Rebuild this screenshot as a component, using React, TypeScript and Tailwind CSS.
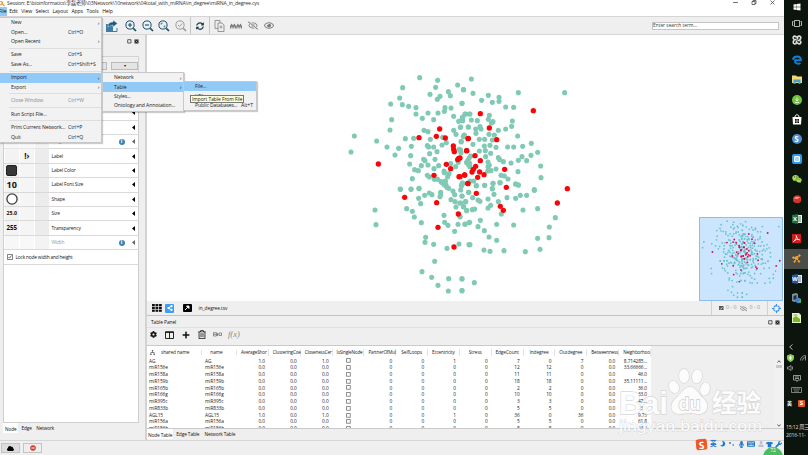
import type { ReactNode } from "react";
import {
  FaCloud,
  FaCog,
  FaEdge,
  FaKeyboard,
  FaMicrophone,
  FaMoon,
  FaPlus,
  FaRegEye,
  FaRegEyeSlash,
  FaRegTrashAlt,
  FaShareAlt,
  FaSyncAlt,
  FaTshirt,
  FaUser,
  FaWeixin,
  FaWindows,
  FaWrench,
} from "react-icons/fa";

type Cluster = { x: number; y: number; teal: string; red: string };

// node positions per cluster, stored in thirds of a pixel from the cluster origin
const clusters: Cluster[] = [
  {
    x: 340,
    y: 70,
    teal: "239,23 293,31 188,53 287,52 353,45 370,59 270,73 325,65 331,77 300,79 292,88 179,84 152,102 187,104 206,109 228,113 366,100 315,113 333,114 313,124 228,132 264,129 294,129 247,145 281,149 155,149 341,139 375,132 387,132 368,142 356,154 368,152 150,180 43,198 110,213 33,246 141,231 176,235 165,255 196,206 221,205 214,229 212,257 252,181 264,185 271,208 308,202 319,218 306,225 262,227 266,231 281,231 291,245 269,251 341,181 348,193 361,172 385,171 373,195 370,200 363,215 358,238 362,244 285,268 251,268 255,272 244,287 264,285 209,282 282,296 296,287 224,299 235,302 217,326 262,316 268,321 312,303 313,308 327,311 323,320 332,281 347,290 355,277 387,265 381,276 386,285 293,328 283,328 305,337 316,333 312,343 317,347 321,352 367,340 365,346 213,357 237,355 181,357",
    red: "299,177 289,199 316,204 237,203 384,206 340,228 341,238 343,245 380,242 356,265 353,269 319,283 332,296 115,282 282,316 357,320 374,315 383,340",
  },
  {
    x: 460,
    y: 70,
    teal: "34,27 11,59 39,70 85,76 117,82 117,94 97,97 65,91 6,100 175,68 314,68 137,111 161,112 16,132 30,132 8,141 6,149 88,136 85,148 99,155 94,159 34,150 52,152 157,153 155,169 137,177 115,181 25,171 2,171 60,170 47,177 63,177 48,190 87,193 103,195 173,198 12,196 4,215 58,208 74,208 97,210 39,223 90,226 73,228 108,232 143,231 161,231 188,229 214,220 233,247 213,256 186,260 175,271 200,272 242,288 243,323 153,279 174,305 2,240 3,248 58,243 76,242 92,250 77,260 115,263 119,269 130,275 32,258 22,273 29,280 20,278 84,276 88,286 108,297 83,303 93,302 84,290 30,290 123,316 133,318 144,327 30,333 41,333 99,340 120,338 8,339 4,347 49,347 74,346 97,356 167,342 175,345 223,359",
    red: "220,122 61,131 88,174 110,209 25,205 20,242 45,257 0,264 61,272 47,289 40,298 36,306 59,306 72,314 53,322 14,315 0,320 24,341 134,298 139,352 322,356",
  },
  {
    x: 340,
    y: 180,
    teal: "181,28 213,28 237,26 236,55 254,46 268,39 276,44 242,71 200,86 217,94 223,111 244,128 302,37 302,44 300,50 312,12 316,5 318,16 326,25 339,33 344,44 362,30 365,15 368,10 366,48 386,37 333,59 345,65 359,69 377,65 348,81 371,80 380,91 312,106 360,110 314,127 324,136 354,133 375,133 387,128 344,154 105,90 108,134 257,172 255,187 281,193 357,192 321,205 387,194 284,244 246,275 275,292 294,316 326,296 366,296 325,333 366,332 303,5",
    red: "194,52 290,68 355,102 294,142 342,201",
  },
  {
    x: 460,
    y: 180,
    teal: "49,17 74,16 99,10 120,8 97,26 102,43 26,37 6,48 38,53 54,60 60,64 17,65 3,69 10,80 20,92 37,89 44,87 84,84 92,76 84,57 115,65 124,102 167,12 175,15 223,31 181,46 200,46 167,55 141,53 189,90 233,86 286,113 268,141 61,121 29,127 15,132 54,140 73,152 110,133 161,135 87,171 110,181 30,194 72,210 90,214 132,212 233,175 267,173 196,215 240,208 6,297 43,308 6,332 0,110",
    red: "49,40 121,79 130,91 292,69",
  },
];

function toPoints(cluster: Cluster, key: "teal" | "red") {
  return cluster[key].split(" ").map((pair) => {
    const [px, py] = pair.split(",").map(Number);
    return [cluster.x + px / 3, cluster.y + py / 3];
  });
}

const tealNodes = clusters.flatMap((c) => toPoints(c, "teal"));
const redNodes = clusters.flatMap((c) => toPoints(c, "red"));

function NetworkNodes({ r, teal, red }: { r: number; teal: string; red: string }) {
  return (
    <>
      {tealNodes.map(([x, y], i) => (
        <circle key={`t${i}`} cx={x} cy={y} r={r} fill={teal} />
      ))}
      {redNodes.map(([x, y], i) => (
        <circle key={`r${i}`} cx={x} cy={y} r={r + 0.1} fill={red} />
      ))}
    </>
  );
}

function TitleBar() {
  return (
    <div className="flex h-[7px] items-center overflow-hidden bg-white">
      <svg viewBox="0 0 5 7" className="mr-[2px] h-[6px] w-[5px]">
        <path d="M0 0l3 2M2 3l3 3M2 3l-2 2" stroke="#e8891c" strokeWidth="1.2" />
      </svg>
      <span className="text-[5.2px] leading-[7px] tracking-[-0.18px] text-[#333]">
        Session: E:\bioinformatics\李磊老师\03Network\10network\04total_with_miRNA\in_degree\miRNA_in_degree.cys
      </span>
      <svg viewBox="0 0 50 7" className="ml-auto mr-[6px] h-[7px] w-[50px]" fill="none" stroke="#333" strokeWidth="0.7">
        <path d="M5 2.5h5M42.5 0.5l4 4M46.5 0.5l-4 4" />
        <path d="M24 1.5h3v3h-3zM25 1.5v-1h3v3h-1" />
      </svg>
    </div>
  );
}

const menuNames = ["File", "Edit", "View", "Select", "Layout", "Apps", "Tools", "Help"];

function MenuBar() {
  return (
    <div className="flex h-[9px] items-center bg-white text-[5.1px] leading-[9px] tracking-[-0.12px]">
      {menuNames.map((name) => (
        <span
          key={name}
          className="px-[1.8px] first:-ml-[3px] first:bg-[#91c9f7] first:pr-[1px]"
        >
          {name}
        </span>
      ))}
    </div>
  );
}

function Magnifier({ children, muted }: { children?: ReactNode; muted?: boolean }) {
  return (
    <svg viewBox="0 0 12 12" className="size-[12px]" fill="none" stroke={muted ? "#9b9b9b" : "#1f4e66"}>
      <circle cx="5" cy="5" r="4.1" strokeWidth="1" fill={muted ? "none" : "#e6f0f5"} />
      <path d="M8.3 8.3l2.7 2.7" strokeWidth="1.7" />
      {children}
    </svg>
  );
}

function Toolbar() {
  return (
    <div className="flex h-[19px] items-center border-y border-[#d5d5d5] bg-[#efefef] pl-[105px] pr-[5px]">
      <svg viewBox="0 0 13 13" className="size-[13px]">
        <path d="M1 5h7v7H1z" fill="#3c7ea6" />
        <path d="M3 8c0-4 2-5 5-5V1l4.5 3.5L8 8V6C6 6 5 7 3 8z" fill="#1d5a80" stroke="#efefef" strokeWidth="0.5" />
        <path d="M1 12.5h11V9" stroke="#3c7ea6" fill="none" />
      </svg>
      <div className="ml-[7px] flex gap-[4.5px]">
        <Magnifier>
          <path d="M3 5h4M5 3v4" strokeWidth="1.1" />
        </Magnifier>
        <Magnifier>
          <path d="M3 5h4" strokeWidth="1.1" />
        </Magnifier>
        <Magnifier>
          <path d="M3.2 4.5V3.2h1.3M5.5 6.8h1.3V5.5" strokeWidth="0.8" />
        </Magnifier>
        <Magnifier muted>
          <path d="M3 5l1.5 1.5L7.2 3.5" strokeWidth="1" />
        </Magnifier>
      </div>
      <div className="ml-[3px] h-[17px] w-px bg-[#c6c6c6]" />
      <FaSyncAlt className="ml-[5px] size-[8px] text-[#163d52]" />
      <div className="ml-[5px] h-[17px] w-px bg-[#c6c6c6]" />
      <svg viewBox="0 0 11 12" className="ml-[4px] h-[12px] w-[11px]" fill="#eee" stroke="#8d8d8d" strokeWidth="0.9">
        <path d="M1 0.5h5v8H1z" />
        <path d="M4 3h4l2 2v6.5H4z" />
        <path d="M5.5 7h3M7 5.5v3" />
      </svg>
      {/* first neighbours: two pairs of houses */}
      <svg viewBox="0 0 12 6" className="ml-[5px] h-[6px] w-[12px]" fill="#7b7b7b">
        <path d="M0 3L1.600 0.500 3 2.500 4.400 0.500 6 3v2.500H4.700V3.800H3.700v1.700H2.400V3.800H1.400v1.700H0z" />
        <path d="M6.300 3L7.800 0.500 9.200 2.500 10.500 0.500 12 3v2.500h-1.300V3.800h-1v1.700H8.500V3.800h-1v1.700H6.300z" />
      </svg>
      <FaRegEyeSlash className="ml-[6px] h-[9px] w-[10px] text-[#777]" />
      <FaRegEye className="ml-[6px] h-[9px] w-[10px] text-[#777]" />
      <div className="ml-auto flex h-[8px] w-[127px] items-center border border-[#c4c4c4] bg-white text-[4.8px] tracking-[0.02px] text-[#333]">
        Enter search term...
      </div>
    </div>
  );
}

type Prop = { label: string; def?: ReactNode; mapping?: string; info?: boolean };

const props: Prop[] = [
  { label: "Fill Color" },
  { label: "Border Width" },
  { label: "Height", info: true },
  { label: "Label", mapping: "!›" },
  { label: "Label Color", def: <div className="size-[11px] rounded-[2px] border border-[#222] bg-[#383838]" /> },
  { label: "Label Font Size", def: <span className="text-[9px] font-bold">10</span> },
  {
    label: "Shape",
    def: (
      <svg viewBox="0 0 12 12" className="size-[12px]">
        <circle cx="6" cy="6" r="5.1" fill="#fff" stroke="#3c3c3c" strokeWidth="1.3" />
      </svg>
    ),
  },
  { label: "Size", def: <span className="text-[5.2px] font-bold">25.0</span> },
  { label: "Transparency", def: <span className="text-[6.2px] font-bold">255</span> },
  { label: "Width", info: true },
];

function PropertyRow({ label, def, mapping, info }: Prop) {
  return (
    <div className="flex h-[14.4px] items-center border-b border-[#d9d9d9] pl-[1px] pr-[3.5px]">
      <div className={`flex gap-[1.5px] ${info ? "opacity-60" : ""}`}>
        <div className="flex size-[13.5px] items-center justify-center bg-[#f3f3f3]">{def}</div>
        <div className="flex size-[13.5px] items-center justify-center bg-[#f5f5f5] text-[8px] font-bold">{mapping}</div>
        <div className="size-[13.5px] bg-[#ececec]" />
      </div>
      <span className={`ml-[3px] text-[4.9px] tracking-[-0.15px] ${info ? "text-[#999]" : "text-[#222]"}`}>{label}</span>
      {info ? (
        <span className="ml-auto flex size-[6px] items-center justify-center rounded-full bg-[#3c86b5] text-[5px] font-bold text-white">
          i
        </span>
      ) : null}
      <svg viewBox="0 0 3 5" className={`h-[5px] w-[3px] ${info ? "ml-[7px] opacity-60" : "ml-auto"}`}>
        <path d="M3 0v5L0 2.5z" />
      </svg>
    </div>
  );
}

function WindowButtons() {
  return (
    <svg viewBox="0 0 12 5" className="h-[5px] w-[12px]">
      <path d="M0.7 0.7h3.3v3.3H0.7z" fill="none" stroke="#222" strokeWidth="0.7" />
      <path d="M7.5 0.5h4v4h-4z" fill="#222" />
      <path d="M8.5 1.5l2 2M10.5 1.5l-2 2" stroke="#ddd" strokeWidth="0.5" />
    </svg>
  );
}

function ControlPanel() {
  return (
    <aside className="flex w-[147px] shrink-0 flex-col border-r-2 border-[#d3d3d3] bg-[#efefef] pl-[3px] pr-[6px]">
      <div className="flex h-[22px] justify-end border-b border-[#d3d3d3] pt-[4px]">
        <WindowButtons />
      </div>
      <div className="flex h-[18px] items-center justify-end gap-[4px] border-r border-[#d3d3d3]">
        <div className="h-[8px] w-[26px] border border-[#bbb] bg-[#e4e4e4]" />
        <div className="flex h-[8px] w-[27px] items-center justify-center border border-[#bbb] bg-[#e4e4e4] text-[4px]">
          ▾
        </div>
      </div>
      <div className="h-[31.3px] border border-b-0 border-[#d3d3d3] bg-[#f3f3f3]" />
      <div className="flex-1 border border-t-0 border-[#cfcfcf] bg-white">
        {props.map((p) => (
          <PropertyRow key={p.label} {...p} />
        ))}
        <div className="flex h-[15px] items-center gap-[3px] border-b border-[#d9d9d9] pl-[2.5px] text-[4.8px] tracking-[-0.18px]">
          <svg viewBox="0 0 6 6" className="size-[6px]" fill="none" stroke="#333">
            <path d="M0.5 0.5h5v5h-5z" strokeWidth="0.6" />
            <path d="M1.5 3l1 1.2L4.5 1.5" strokeWidth="0.7" />
          </svg>
          Lock node width and height
        </div>
      </div>
      <div className="flex h-[17px] items-start text-[4.7px] leading-[12px] tracking-[-0.1px]">
        <span className="h-[10px] bg-white px-[2px]">Node</span>
        <span className="px-[3px] leading-[11px]">Edge</span>
        <span className="px-[1.5px] leading-[11px]">Network</span>
      </div>
    </aside>
  );
}

function NetworkView() {
  return (
    <div className="relative h-[266px] bg-white">
      <svg viewBox="147 35 637 266" className="h-[266px] w-[637px]">
        <NetworkNodes r={2.55} teal="#80cab5" red="#f90509" />
      </svg>
      <svg
        viewBox="343.5 68.7 230 230"
        className="absolute bottom-0 right-[1px] size-[84px] border border-[#8dbdea] bg-[#cce5ff]"
      >
        <NetworkNodes r={2.5} teal="#6cc2ca" red="#c9184c" />
      </svg>
    </div>
  );
}

function NetworkBar() {
  return (
    <div className="flex h-[15px] items-center border-b border-[#c3c3c3] bg-[#efefef] pl-[5px] text-[5px]">
      <svg viewBox="0 0 10 8" className="h-[8px] w-[10px]">
        {[0, 3.5, 7].map((x) =>
          [0, 2.8, 5.6].map((y) => <rect key={`${x}-${y}`} x={x} y={y} width="2.8" height="2.2" fill="#111" />)
        )}
      </svg>
      <span className="ml-[3px] flex size-[9px] items-center justify-center rounded-[1px] bg-[#3f9df0]">
        <FaShareAlt className="size-[6px] text-white" />
      </span>
      <span className="ml-[9px] flex size-[8.5px] items-center justify-center rounded-[1px] bg-black">
        <svg viewBox="0 0 6 6" className="size-[6px]">
          <path d="M1 5l3-3M2.5 1H5v2.500z" stroke="#fff" fill="#fff" strokeWidth="0.9" />
        </svg>
      </span>
      <span className="ml-[7px] text-[4.8px] tracking-[-0.05px]">in_degree.tsv</span>
      <div className="ml-auto flex h-[14px] items-center gap-[2px] border-l border-[#d2d2d2] pl-[7px] text-[5.3px] text-[#999]">
        <svg viewBox="0 0 5 5" className="size-[4.5px]">
          <path d="M0 0h5v5H0z" fill="#555" />
          <path d="M1 2.5l1 1.2L4 1.3" stroke="#fff" fill="none" strokeWidth="0.7" />
        </svg>
        0 - 0
        <FaRegEyeSlash className="ml-[2px] size-[7px] text-[#777]" />
        0 - 0
      </div>
      <div className="ml-[7px] flex h-[14px] w-[17px] items-center justify-center border-l border-[#d2d2d2]">
        <svg viewBox="0 0 9 9" className="size-[9px]" fill="none" stroke="#3a8ee6" strokeWidth="1.1">
          <circle cx="4.5" cy="4.5" r="2.9" strokeDasharray="3 1.55" strokeDashoffset="-0.8" />
          <path d="M4.500 0v2.5M4.5 6.5V9M0 4.5h2.5M6.5 4.5H9" />
        </svg>
      </div>
    </div>
  );
}

// header labels as they fit the default column width
const columns = [
  "AverageShor",
  "ClusteringCoe",
  "ClosenessCer",
  "IsSingleNode",
  "PartnerOfMul",
  "SelfLoops",
  "Eccentricity",
  "Stress",
  "EdgeCount",
  "Indegree",
  "Outdegree",
  "Betweenness",
  "Neighborhoo",
];

// name, average path, closeness, eccentricity, edges, in, out, neighborhood
const rows = [
  ["AG", "1.0", "1.0", "1", "7", "0", "7", "8.714285..."],
  ["miR156e", "0.0", "0.0", "0", "12", "12", "0", "33.66666..."],
  ["miR158a", "0.0", "0.0", "0", "11", "11", "0", "46.0"],
  ["miR159b", "0.0", "0.0", "0", "18", "18", "0", "35.11111..."],
  ["miR165b", "0.0", "0.0", "0", "2", "2", "0", "36.0"],
  ["miR166g", "0.0", "0.0", "0", "10", "10", "0", "33.0"],
  ["miR395c", "0.0", "0.0", "0", "3", "3", "0", "47.0"],
  ["miR833b", "0.0", "0.0", "0", "5", "5", "0", "23.0"],
  ["AGL15", "1.0", "1.0", "1", "36", "0", "36", "9.75"],
  ["miR156a", "0.0", "0.0", "0", "5", "5", "0", "61.8"],
  ["miR156h", "0.0", "0.0", "0", "8", "8", "0", "44.0"],
];

function NodeTable() {
  return (
    <div className="relative h-[84px] overflow-hidden border-y border-[#c9c9c9] bg-[#efefef]">
      <div className="h-[84px] w-[504px] overflow-hidden bg-white pl-px text-[4.8px] tracking-[-0.1px] text-[#222]">
        <div className="flex h-[11.500px] items-center pt-[1px]">
          <div className="flex w-[54px] items-center border-r border-[#e2e2e2] pl-[2px]">
            <svg viewBox="0 0 6 6" className="size-[5px]" fill="none" stroke="#333" strokeWidth="0.7">
              <path d="M3 0v3M1 6V3h4v3M0 5.5h2M4 5.5h2M2 0.5h2" />
            </svg>
            <span className="ml-[6px]">shared name</span>
          </div>
          <div className="w-[35px] border-r border-[#e2e2e2] pr-[5px] text-center">name</div>
          {columns.map((c) => (
            <div key={c} className="flex h-[7px] w-[31.85px] shrink-0 items-center border-r border-[#e2e2e2] pl-[4px]">
              <span className={c.length > 10 ? "text-[4.6px] tracking-[-0.15px]" : "mx-auto -translate-x-[2px]"}>{c}</span>
            </div>
          ))}
        </div>
        {rows.map(([name, avg, close, ecc, edges, inn, out, nb]) => (
          <div key={name} className="flex h-[6.77px] items-center leading-[6.77px]">
            <div className="w-[54px] pl-[1px]">{name}</div>
            <div className="w-[35px] pl-[3px]">{name}</div>
            {[avg, "0.0", close, null, "0", "0", ecc, "0", edges, inn, out, "0.0", nb].map((v, i) => (
              <div key={i} className="w-[31.85px] pr-[4px] text-right">
                {v === null ? (
                  <svg viewBox="0 0 5 5" className="ml-auto mr-[9.5px] size-[5px]">
                    <path d="M0.5 0.5h3.8v3.8H0.5z" fill="none" stroke="#444" strokeWidth="0.6" />
                  </svg>
                ) : (
                  v
                )}
              </div>
            ))}
          </div>
        ))}
      </div>
      <div className="absolute right-[1px] top-[13px] flex h-[70px] w-[8px] flex-col items-center bg-[#f1f1f1]">
        <svg viewBox="0 0 4 3" className="mt-[1px] h-[3px] w-[4px]">
          <path d="M0.5 2.5L2 0.7l1.5 1.8" fill="none" stroke="#333" strokeWidth="0.8" />
        </svg>
        <div className="mt-[2px] h-[3px] w-[6px] bg-[#c8c8c8]" />
        <svg viewBox="0 0 4 3" className="mb-[2px] mt-auto h-[3px] w-[4px]">
          <path d="M0.5 0.5L2 2.3l1.5-1.8" fill="none" stroke="#333" strokeWidth="0.8" />
        </svg>
      </div>
    </div>
  );
}

function TablePanel() {
  return (
    <section className="flex flex-1 flex-col bg-[#efefef]">
      <div className="flex h-[12px] items-center justify-between border-b border-[#e2e2e2] pl-[4px] pr-[4px] pt-[1px] text-[4.9px] tracking-[-0.1px]">
        Table Panel
        <WindowButtons />
      </div>
      <div className="flex h-[17px] items-center pb-[4px] pl-[3px]">
        <FaCog className="size-[7px]" />
        <svg viewBox="0 0 9 8" className="ml-[8px] h-[8px] w-[9px]" fill="none" stroke="#111" strokeWidth="0.9">
          <path d="M0.5 0.7h8v6.8h-8zM4.5 1v6.5M0.5 1.5h8" />
        </svg>
        <FaPlus className="ml-[8px] size-[8px]" />
        <FaRegTrashAlt className="ml-[8px] h-[9px] w-[8px] text-[#222]" />
        <svg viewBox="0 0 9 5" className="ml-[7px] h-[5px] w-[9px]" fill="none" stroke="#777">
          <path d="M0.5 0.7h3v3.3h-3zM0.5 2.3h5M4.5 1v3M6 1h2.5v2.5H6z" strokeWidth="0.8" />
        </svg>
        <span className="ml-[6px] font-['Liberation_Serif',serif] text-[8.5px] italic text-[#888]">f(x)</span>
      </div>
      <NodeTable />
      <div className="flex h-[11px] items-start text-[4.8px] leading-[12px] tracking-[-0.12px]">
        <span className="h-[10px] bg-white px-[1px]">Node Table</span>
        <span className="px-[3px] leading-[10px]">Edge Table</span>
        <span className="px-[2px] leading-[10px]">Network Table</span>
      </div>
    </section>
  );
}

type Item = { label: string; keys?: string; sub?: boolean; active?: boolean; muted?: boolean } | "sep";

const fileMenu: Item[] = [
  { label: "New", sub: true },
  { label: "Open...", keys: "Ctrl+O" },
  { label: "Open Recent", sub: true },
  "sep",
  { label: "Save", keys: "Ctrl+S" },
  { label: "Save As...", keys: "Ctrl+Shift+S" },
  "sep",
  { label: "Import", sub: true, active: true },
  { label: "Export", sub: true },
  "sep",
  { label: "Close Window", keys: "Ctrl+W", muted: true },
  "sep",
  { label: "Run Script File..." },
  "sep",
  { label: "Print Current Network...", keys: "Ctrl+P" },
  { label: "Quit", keys: "Ctrl+Q" },
];

const importMenu: Item[] = [
  { label: "Network", sub: true },
  { label: "Table", sub: true, active: true },
  { label: "Styles..." },
  { label: "Ontology and Annotation..." },
];

const tableMenu: Item[] = [
  { label: "File...", active: true },
  { label: "URL..." },
  { label: "Public Databases...", keys: "Alt+T" },
];

function Menu({ items, className, keysAt }: { items: Item[]; className: string; keysAt: string }) {
  return (
    <div
      className={`absolute border border-[#c8c8c8] bg-[#f2f2f2] text-[5.1px] tracking-[-0.1px] shadow-[1px_1px_1px_rgba(0,0,0,0.2)] ${className}`}
    >
      {items.map((item, i) =>
        item === "sep" ? (
          <div key={i} className="flex h-[4.1px] items-center pl-[9px]">
            <div className="h-[1px] w-full bg-[#dedede]" />
          </div>
        ) : (
          <div
            key={i}
            className={`relative flex h-[9.4px] items-center ${item.active ? "bg-[#91c9f7]" : ""} ${
              item.muted ? "text-[#8c8c8c]" : "text-[#222]"
            }`}
          >
            <span className="pl-[11px]">{item.label}</span>
            {item.keys ? <span className={`absolute tracking-[0px] ${keysAt}`}>{item.keys}</span> : null}
            {item.sub ? <span className="ml-auto pr-[1.5px] text-[6px]">›</span> : null}
          </div>
        )
      )}
    </div>
  );
}

function TaskIcon({ children, active }: { children: ReactNode; active?: boolean }) {
  return (
    <div className={`flex h-[19.9px] shrink-0 items-center justify-center pl-[1px] ${active ? "bg-[#4b4d49]" : ""}`}>{children}</div>
  );
}

function OfficeIcon({ letter, color }: { letter: string; color: string }) {
  return (
    <svg viewBox="0 0 10 10" className="size-[10px]">
      <path d="M5 1h5v8H5z" fill="#e9eef0" />
      <path d="M6 3h3M6 5h3M6 7h3" stroke={color} strokeWidth="0.8" />
      <path d="M0 1l6-1v10L0 9z" fill={color} />
      <text x="3" y="7.2" fontSize="6" fontWeight="700" fill="#fff" textAnchor="middle">
        {letter}
      </text>
    </svg>
  );
}

function Taskbar() {
  return (
    <aside className="flex w-[24px] shrink-0 flex-col overflow-hidden bg-[#0b140d] text-white">
      <div className="flex h-[13px] items-center justify-center pl-[1px]">
        <FaWindows className="size-[8px]" />
      </div>
      <div className="flex h-[17px] items-center justify-center pl-[1px] pt-[3px]">
        <svg viewBox="0 0 10 7" className="h-[7px] w-[10px]" fill="none" stroke="#ddd" strokeWidth="0.8">
          <path d="M2.5 0.5h5v6h-5zM1.5 1.5h-1v4h1M8.5 1.5h1v4h-1" />
        </svg>
      </div>
      <TaskIcon>
        <svg viewBox="0 0 10 10" className="size-[10px]" fill="none" stroke="#ddd" strokeWidth="1.6">
          <path d="M4.500 4.500H2.500a1.700 1.700 0 1 1 2-1.700M5.500 4.500V2.500a1.700 1.700 0 1 1 1.700 2M5.500 5.500h2a1.700 1.700 0 1 1-2 1.700M4.500 5.500v2a1.700 1.700 0 1 1-1.700-2" />
        </svg>
      </TaskIcon>
      <TaskIcon>
        <svg viewBox="0 0 10 10" className="size-[10px]" fill="none" stroke="#0f7fd8" strokeWidth="2">
          <path d="M2.500 5.300h6.300C8.800 2.800 7.300 1.500 5.300 1.500 3 1.500 1.300 2.800 0.800 4.800M3 5.300c-0.500 3.200 3 4.200 5.500 2.700" />
        </svg>
      </TaskIcon>
      <TaskIcon>
        <svg viewBox="0 0 10 9" className="h-[9px] w-[10px]">
          <path d="M0 0.5h4l1 1h5V8H0z" fill="#f5d773" />
          <path d="M1.5 4.5h7V9H6.5V7h-3v2h-2z" fill="#3ba5d5" />
        </svg>
      </TaskIcon>
      <TaskIcon>
        <div className="flex size-[10px] items-center justify-center rounded-full bg-[#71c63d]">
          <svg viewBox="0 0 6 6" className="size-[6px]">
            <path d="M3 0.5v3M1.5 2.5L3 4l1.5-1.500M1 5.5h4" stroke="#e3f5d3" fill="none" />
          </svg>
        </div>
      </TaskIcon>
      <TaskIcon>
        <svg viewBox="0 0 10 11" className="h-[11px] w-[10px]">
          <path d="M3 3c0-3 4-3 4 0" stroke="#fff" fill="none" />
          <path d="M0.5 3h9l-0.5 7.5h-8z" fill="#fff" />
          <path d="M3 5h1.7v1.7H3zM5.3 5H7v1.7H5.3zM3 7.3h1.7V9H3zM5.3 7.3H7V9H5.3z" fill="#111" />
        </svg>
      </TaskIcon>
      <TaskIcon>
        <div className="flex size-[10px] items-center justify-center rounded-full bg-[#4b92d3] text-[8px] font-bold leading-none">S</div>
      </TaskIcon>
      <TaskIcon>
        <div className="flex size-[10px] items-center justify-center rounded-[2px] bg-[#2f9be8]">
          <div className="size-[6px] rounded-[1px] border border-white bg-[#a9d8f7]" />
        </div>
      </TaskIcon>
      <TaskIcon>
        <FaWeixin className="size-[10px] text-[#a7dd54]" />
      </TaskIcon>
      <TaskIcon>
        <svg viewBox="0 0 10 10" className="size-[10px]">
          <path d="M1 4c1-3 6-4 8-1v4c-1 3-6 3-8 0z" fill="#d8302b" />
          <path d="M2 4.500c1-2 4-2.500 6-1l-3 1.500z" fill="#f0a79f" />
        </svg>
      </TaskIcon>
      <TaskIcon>
        <OfficeIcon letter="X" color="#1e7145" />
      </TaskIcon>
      <TaskIcon>
        <svg viewBox="0 0 9 9" className="size-[9px]">
          <path d="M0 0h9v9H0z" fill="#d41b1b" />
          <path d="M1.5 7.5C4 6 5 3 4.2 1.5c1 3 2 4.5 3.500 4.3C6 5 3 5.5 1.5 7.5z" fill="none" stroke="#fff" strokeWidth="0.8" />
        </svg>
      </TaskIcon>
      <TaskIcon active>
        <svg viewBox="0 0 10 10" className="size-[9px]" stroke="#f2a22f" fill="#f2a22f">
          <path d="M1.500 4.500L5 4.500l3.500-3M5 4.500L3 8.500M5 4.500l2.500 3.500" strokeWidth="1.1" />
          <circle cx="1.500" cy="4" r="0.9" />
          <circle cx="5" cy="4.500" r="1.6" />
          <circle cx="8.3" cy="1.7" r="0.9" />
          <circle cx="2.800" cy="8.5" r="0.8" />
          <circle cx="7.700" cy="8.3" r="0.9" />
        </svg>
      </TaskIcon>
      <TaskIcon>
        <OfficeIcon letter="W" color="#2b569a" />
      </TaskIcon>
      <TaskIcon>
        <svg viewBox="0 0 11 11" className="size-[11px]">
          <path d="M1 1l4-1 2 1v7L3 9 1 8z" fill="#7890a0" />
          <path d="M2.5 3l3-1v4l-3 1z" fill="#25313a" />
          <circle cx="7.5" cy="7.5" r="2.7" fill="#3b83cf" />
          <path d="M7 9l3-3v4z" fill="#5bb64a" />
        </svg>
      </TaskIcon>
      <TaskIcon>
        <svg viewBox="0 0 9 10" className="h-[10px] w-[9px]">
          <path d="M0 0h7l2 2v8H0z" fill="#e7f3c5" />
          <path d="M1 5l3-2 4 3v3H1z" fill="#78b82a" />
          <path d="M1.5 2h4" stroke="#777" strokeWidth="0.7" />
        </svg>
      </TaskIcon>
      <div className="mt-[12px] flex h-[13px] items-center pl-[5px]">
        <svg viewBox="0 0 4 6" className="h-[6px] w-[4px]">
          <path d="M3.5 0.5L0.7 3l2.800 2.5" fill="none" stroke="#ddd" strokeWidth="0.8" />
        </svg>
      </div>
      <div className="flex h-[10px] items-center gap-[6px] pl-[3px]">
        <svg viewBox="0 0 7 8" className="h-[8px] w-[7px]">
          <path d="M3.5 0L7 1.5V4c0 2-2 3.5-3.5 4C2 7.5 0 6 0 4V1.5z" fill="#8bcf4e" />
          <path d="M3.5 2v4M2 4h3" stroke="#fff" />
        </svg>
        <svg viewBox="0 0 6 6" className="size-[6px]" fill="none" stroke="#bbb" strokeWidth="0.7">
          <path d="M0.5 5.5a5 5 0 0 1 5-5v5M2.5 5.5a3 3 0 0 1 3-3" />
        </svg>
      </div>
      <div className="flex h-[10px] items-center pl-[3px]">
        <svg viewBox="0 0 7 6" className="h-[6px] w-[7px]" fill="none" stroke="#bbb" strokeWidth="0.7">
          <path d="M0.5 2h1.5l2-1.5v5L2 4H0.5zM5.5 1.5v3" />
        </svg>
      </div>
      <div className="flex h-[11px] items-center pl-[9px]">
        <svg viewBox="0 0 8 7" className="h-[7px] w-[8px]" fill="none" stroke="#ccc" strokeWidth="0.7">
          <path d="M0.5 0.5h7v4.5H5L4 6.5 3 5H0.5zM2 2h4M2 3.5h4" />
        </svg>
      </div>
      <div className="flex h-[12px] items-center pl-[7px]">
        <svg viewBox="0 0 11 6" className="h-[6px] w-[11px]" fill="none" stroke="#aaa" strokeWidth="0.7">
          <path d="M0.5 0.5h10v5H0.5zM2 2h7M3 4h5" />
        </svg>
      </div>
      <div className="flex h-[14px] items-center gap-[6px] pl-[3px]">
        <span className="text-[5px] font-bold">英</span>
        <span className="flex size-[7px] items-center justify-center rounded-[1px] bg-[#ea5524] text-[6px] font-bold leading-none">S</span>
      </div>
      <div className="mt-[14px] pl-[2px] text-[5.2px] leading-[7.3px] tracking-[-0.2px] text-[#ddd]">
        <div>15:12 周三</div>
        <div>2016-11-</div>
      </div>
    </aside>
  );
}

function Watermark() {
  return (
    <svg
      viewBox="615 362 150 76"
      className="absolute left-[615px] top-[362px] h-[76px] w-[150px]"
      stroke="#d2d2d2"
      strokeWidth="1.3"
      fill="#fff"
      paintOrder="stroke"
      opacity="0.85"
      fontFamily="'Liberation Sans', 'Noto Sans CJK SC', sans-serif"
    >
      <text x="619" y="413.5" fontSize="32" fontWeight="700" textLength="49" lengthAdjust="spacingAndGlyphs">
        Bai
      </text>
      <ellipse cx="674" cy="387" rx="4.8" ry="6.3" transform="rotate(-20 674 387)" />
      <ellipse cx="684" cy="376" rx="5" ry="7" />
      <ellipse cx="697" cy="376.5" rx="5" ry="7" transform="rotate(10 697 376.5)" />
      <ellipse cx="705" cy="389" rx="4.8" ry="6.5" transform="rotate(10 705 389)" />
      <path d="M690 387c6 0 8 7 13 11 7 6 5 16-4 16-5 0-6-1-10-1s-5 1-9 1c-10 0-11-10-4-16 5-4 8-11 14-11z" />
      <text x="678.5" y="410" fontSize="18" fontWeight="700" textLength="22" lengthAdjust="spacingAndGlyphs" stroke="#c6c6c6">
        du
      </text>
      <text x="712" y="411.5" fontSize="25" fontWeight="700" textLength="49" lengthAdjust="spacingAndGlyphs">
        经验
      </text>
      <text x="619" y="431" fontSize="15" textLength="143" lengthAdjust="spacingAndGlyphs" strokeWidth="0.8">
        jingyan.baidu.com
      </text>
    </svg>
  );
}

function InputMethodBar() {
  return (
    <div className="absolute left-[696px] top-[438px] flex h-[12px] items-center text-[#1c78cf]">
      <span className="flex size-[11px] -rotate-6 items-center justify-center rounded-[2px] border border-[#ee5527] bg-[#ee5527] text-[10px] font-bold leading-none text-white">
        S
      </span>
      <span className="ml-[3px] text-[6.5px] font-bold">英</span>
      <FaMoon className="ml-[3px] size-[5.5px] -scale-x-100" />
      <svg viewBox="0 0 6 6" className="ml-[4px] size-[6px]" fill="currentColor">
        <circle cx="1" cy="2" r="0.9" />
        <path d="M3.5 3l1.5 0.5-1 2z" />
      </svg>
      <FaMicrophone className="ml-[3px] size-[7px]" />
      <FaKeyboard className="ml-[2px] size-[8px]" />
      <FaUser className="ml-[2.5px] size-[6px] text-[#b9c3cb]" />
      <FaTshirt className="ml-[2px] size-[7px]" />
      <FaWrench className="ml-[2px] size-[7px]" />
    </div>
  );
}

export default function App() {
  return (
    <div className="relative flex h-[455px] w-[808px] overflow-hidden whitespace-nowrap bg-[#efefef] font-['Open_Sans','Noto_Sans_CJK_SC',sans-serif] leading-none text-[#111]">
      <div className="flex w-[784px] flex-col">
        <TitleBar />
        <MenuBar />
        <Toolbar />
        <div className="flex h-[405px]">
          <ControlPanel />
          <main className="flex w-[637px] flex-col">
            <NetworkView />
            <NetworkBar />
            <TablePanel />
          </main>
        </div>
        <footer className="flex h-[15px] items-center gap-[3px] border-t border-[#d5d5d5] bg-[#efefef] pl-[1px]">
          <div className="flex h-[10px] w-[19px] items-center justify-center border border-[#c4c4c4] bg-[#ddd]">
            <FaCloud className="size-[7px] text-black" />
          </div>
          <div className="flex h-[10px] w-[19px] items-center justify-center border border-[#c4c4c4] bg-[#eee]">
            <svg viewBox="0 0 6 6" className="size-[6px]">
              <circle cx="3" cy="3" r="2.8" fill="#d23b2c" />
              <path d="M1.300 3h3.400" stroke="#fff" />
            </svg>
          </div>
        </footer>
      </div>
      <Taskbar />
      <Menu items={fileMenu} className="-left-px top-[17px] w-[103px]" keysAt="left-[68px]" />
      <Menu items={importMenu} className="left-[102px] top-[72px] w-[82px]" keysAt="left-[60px]" />
      <Menu items={tableMenu} className="left-[183px] top-[81px] w-[74px]" keysAt="left-[57px]" />
      <div className="absolute left-[190px] top-[95px] flex h-[8px] w-[54px] items-center border border-[#777] bg-[#ffffdc] pl-[1px] text-[4.8px]">
        Import Table From File
      </div>
      <Watermark />
      <InputMethodBar />
      <div className="absolute left-[763px] top-[447px] flex size-[20px] justify-center rounded-full bg-[#49bd62] pt-[1px] text-[5px] text-white">
        72
      </div>
    </div>
  );
}
